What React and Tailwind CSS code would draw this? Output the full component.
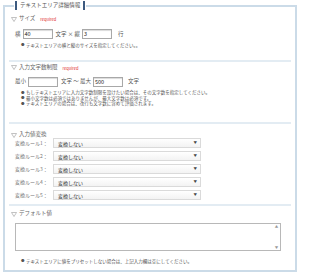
import React from "react";

const Heading = ({ title, required }) => (
  <div className="flex items-center h-[8px] pl-[2px]">
    <span className="w-[8px] flex items-center">
      <svg width="6" height="5" viewBox="0 0 6 5" className="block">
        <polygon points="0.5,0.5 5.5,0.5 3,4.5" fill="none" stroke="#a8a8a8" strokeWidth="0.7" />
      </svg>
    </span>
    <span className="text-[5.5px] leading-none text-[#666]">{title}</span>
    {required && (
      <span className="ml-[5px] text-[4px] leading-none text-[#e02a2a]">required</span>
    )}
  </div>
);

const Bullets = ({ items }) => (
  <ul className="pl-[12px] flex flex-col">
    {items.map((t) => (
      <li key={t} className="flex items-center h-[5.5px] text-[4.5px] leading-none text-[#555]">
        <span className="w-[5px] text-[3.5px]">●</span>
        <span>{t}</span>
      </li>
    ))}
  </ul>
);

const Box = ({ value }) => (
  <span className="w-[30px] h-[10px] border border-[#a8a8a8] bg-white shadow-[inset_0_1px_1px_rgba(0,0,0,0.15)] px-[1px] text-[5.5px] leading-[8px] text-[#222]">
    {value}
  </span>
);

const rules = [1, 2, 3, 4, 5];

export default function App() {
  return (
    <div className="w-[300px] h-[279px] bg-white font-['Noto_Sans_CJK_JP',sans-serif] pt-[1px] px-[3px]">
      <fieldset className="border-2 border-[#cbdbe8] px-[4px] pb-[6px]">
        <legend className="ml-[5px] px-[1px] flex items-center gap-[2px]">
          <span className="w-[2px] h-[9px] bg-[#3c5a80]" />
          <span className="text-[5.5px] leading-none text-[#555] px-[1px]">テキストエリア詳細情報</span>
          <span className="w-[2px] h-[9px] bg-[#3c5a80]" />
        </legend>

        {/* サイズ */}
        <section className="pt-[5px] pb-[12px] border-b-2 border-[#e3ecf3]">
          <Heading title="サイズ" required />
          <div className="flex items-center gap-[2px] mt-[6px] pl-[6px] text-[5.5px] text-[#555]">
            <span>横</span>
            <Box value="40" />
            <span className="ml-[1px]">文字 × 縦</span>
            <Box value="3" />
            <span className="ml-[4px]">行</span>
          </div>
          <div className="mt-[3px]">
            <Bullets items={["テキストエリアの横と縦のサイズを指定してください。。"]} />
          </div>
        </section>

        {/* 入力文字数制限 */}
        <section className="pt-[2px] pb-[16px] border-b-2 border-[#e3ecf3]">
          <Heading title="入力文字数制限" required />
          <div className="flex items-center gap-[2px] mt-[5px] pl-[6px] text-[5.5px] text-[#555]">
            <span>最小</span>
            <Box value="" />
            <span className="ml-[1px]">文字 ～ 最大</span>
            <Box value="500" />
            <span className="ml-[3px]">文字</span>
          </div>
          <div className="mt-[3px]">
            <Bullets
              items={[
                "もしテキストエリアに入力文字数制限を設けたい場合は、その文字数を指定してください。",
                "最小文字数は必須ではありませんが、最大文字数は必須です。",
                "テキストエリアの場合は、改行も文字数に含めて評価されます。",
              ]}
            />
          </div>
        </section>

        {/* 入力値変換 */}
        <section className="pt-[7px] pb-[4px] border-b-2 border-[#e3ecf3]">
          <Heading title="入力値変換" />
          <div className="flex flex-col gap-[3px] -mt-[1px] pl-[6px]">
            {rules.map((n) => (
              <div key={n} className="flex items-center h-[10px]">
                <span className="w-[38px] text-[5px] text-[#777]">変換ルール{n}：</span>
                <div className="w-[148px] h-[10px] flex items-center justify-between border border-[#dadada] bg-gradient-to-b from-white to-[#f3f3f3] pl-[4px] pr-[3px]">
                  <span className="text-[5px] leading-none text-[#333]">変換しない</span>
                  <span className="text-[3.5px] leading-none text-[#444]">▼</span>
                </div>
              </div>
            ))}
          </div>
        </section>

        {/* デフォルト値 */}
        <section className="pt-[4px]">
          <Heading title="デフォルト値" />
          <div className="mt-[5px] ml-[6px] w-[266px] h-[28px] border border-[#b8b8b8] bg-white flex justify-end">
            <div className="w-[7px] flex flex-col justify-between items-center py-[1px] text-[3.5px] text-[#999] leading-none">
              <span>▲</span>
              <span>▼</span>
            </div>
          </div>
          <div className="mt-[7px]">
            <Bullets items={["テキストエリアに値をプリセットしない場合は、上記入力欄は空にしてください。"]} />
          </div>
        </section>
      </fieldset>
    </div>
  );
}
